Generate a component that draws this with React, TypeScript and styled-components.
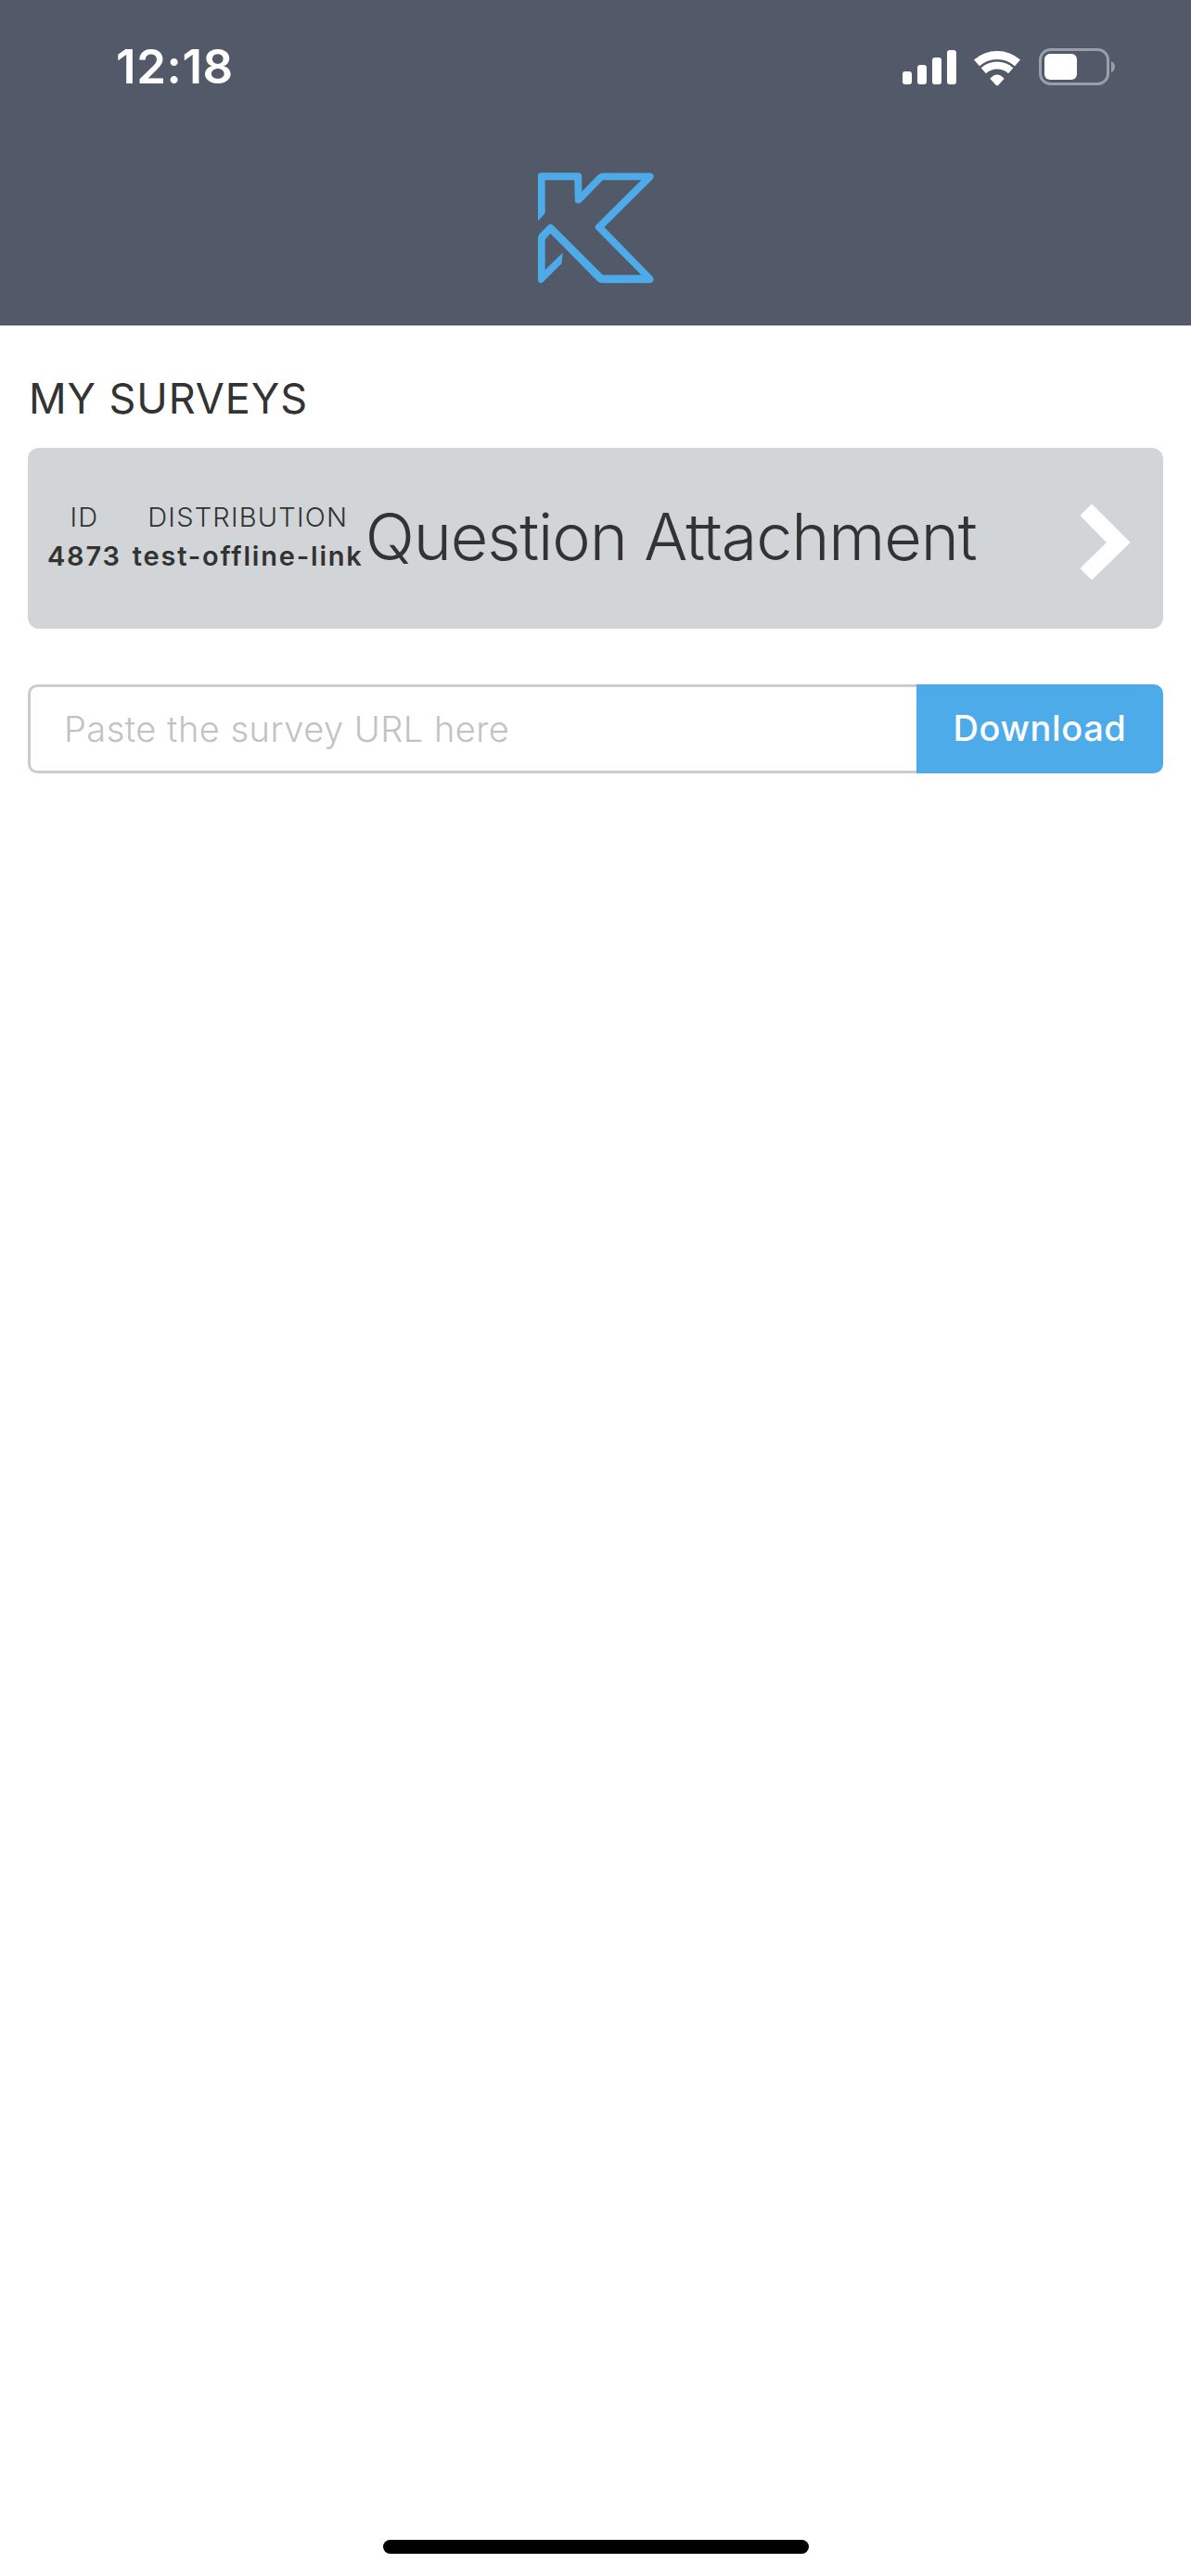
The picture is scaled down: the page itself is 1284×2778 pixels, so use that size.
import React from "react";
import styled, { createGlobalStyle } from "styled-components";

const Global = createGlobalStyle`
  html, body { margin: 0; padding: 0; background: #fff; }
  * { box-sizing: border-box; }
  body { font-family: Inter, "Liberation Sans", sans-serif; color: #333; }
`;

const Page = styled.div`
  width: 1284px;
  height: 2778px;
  display: flex;
  flex-direction: column;
  background: #fff;
`;

const Header = styled.header`
  height: 351px;
  background: #525969;
  display: flex;
  flex-direction: column;
  align-items: center;
`;

const StatusBar = styled.div`
  width: 100%;
  height: 186px;
  padding: 52px 82px 0 125px;
  display: flex;
  justify-content: space-between;
  align-items: flex-start;
`;

const Time = styled.span`
  font-size: 51px;
  line-height: 40px;
  font-weight: 600;
  color: #fff;
  letter-spacing: 0.6px;
`;

const StatusIcons = styled.div`
  display: flex;
  align-items: flex-start;
  gap: 19px;
`;

const StatusGlyph = styled.svg`
  margin-top: 2px;
`;

const LogoMark = styled.svg`
  margin-left: 1px;
`;

const ChevronMark = styled.svg`
  margin-top: 8px;
`;

const Main = styled.main`
  flex: 1;
  padding: 0 30px;
  display: flex;
  flex-direction: column;
`;

const Title = styled.h1`
  margin: 56px 0 0 1px;
  height: 76px;
  font-size: 45px;
  line-height: 46px;
  font-weight: 400;
  letter-spacing: 0.9px;
  color: #333;
`;

const Card = styled.div`
  height: 195px;
  background: #d2d5d8;
  border-radius: 12px;
  padding: 0 36px 0 21px;
  display: flex;
  align-items: center;
`;

const Meta = styled.div`
  display: flex;
  gap: 12px;
  margin-top: -4px;
`;

const MetaColumn = styled.div`
  display: flex;
  flex-direction: column;
  align-items: center;
`;

const MetaLabel = styled.span`
  font-size: 29px;
  line-height: 42px;
  font-weight: 350;
  letter-spacing: 1.2px;
  color: #333;
`;

const MetaValue = styled.span`
  font-size: 29px;
  line-height: 42px;
  font-weight: 600;
  letter-spacing: 1.8px;
  color: #333;
`;

const CardTitle = styled.span`
  flex: 1;
  margin: -3px 0 0 2px;
  font-size: 70px;
  line-height: 80px;
  font-weight: 350;
  letter-spacing: -1.1px;
  color: #333;
  white-space: nowrap;
`;

const SearchRow = styled.form`
  margin-top: 60px;
  height: 96px;
  display: flex;
`;

const UrlInput = styled.input`
  flex: 1;
  min-width: 0;
  height: 100%;
  padding: 0 36px;
  border: 3px solid #ccc;
  border-right: none;
  border-radius: 10px 0 0 10px;
  outline: none;
  background: #fff;
  font-family: Inter, "Liberation Sans", sans-serif;
  font-size: 38px;
  font-weight: 300;
  letter-spacing: 0.5px;
  &::placeholder { color: #c2c2c2; opacity: 1; }
`;

const DownloadButton = styled.button`
  width: 266px;
  height: 100%;
  border: none;
  border-radius: 0 10px 10px 0;
  background: #4eabea;
  color: #fff;
  font-family: Inter, "Liberation Sans", sans-serif;
  font-size: 38px;
  font-weight: 500;
  letter-spacing: 0.6px;
  padding: 0 0 3px;
`;

const HomeIndicator = styled.div`
  align-self: center;
  width: 459px;
  height: 15px;
  margin-bottom: 24px;
  border-radius: 8px;
  background: #000;
`;

const Signal = () => (
  <StatusGlyph width="58" height="37" viewBox="0 0 58 37">
    <rect x="0" y="23" width="10" height="14" rx="3" fill="#fff" />
    <rect x="16" y="16" width="10" height="21" rx="3" fill="#fff" />
    <rect x="32" y="8" width="10" height="29" rx="3" fill="#fff" />
    <rect x="48" y="0" width="10" height="37" rx="3" fill="#fff" />
  </StatusGlyph>
);

const Wifi = () => (
  <StatusGlyph width="51" height="39" viewBox="300 70 153 116">
    <path d="M309 111 A99 99 0 0 1 441 111" fill="none" stroke="#fff" strokeWidth="27" />
    <path d="M331 136 A66 66 0 0 1 419 136" fill="none" stroke="#fff" strokeWidth="24" />
    <path d="M352 162 Q375 136 398 162 L379 183 Q375 186 371 183 Z" fill="#fff" />
  </StatusGlyph>
);

const Battery = () => (
  <svg width="82" height="40" viewBox="0 0 82 40">
    <rect x="1.5" y="1.5" width="73" height="37" rx="11" fill="none" stroke="#9a9fa9" strokeWidth="3" />
    <rect x="6" y="6" width="35" height="28" rx="6" fill="#fff" />
    <path d="M78 14 Q82 16 82 20 Q82 24 78 26 Z" fill="#9a9fa9" />
  </svg>
);

const Logo = () => (
  <LogoMark width="125" height="120" viewBox="120 78 376 360" aria-label="K logo">
    <path
      fill="#4eabea"
      d="M120 235 L120 88 Q120 78 130 78 L250 78 Q262 78 262 90 L262 140 L315 85 Q322 79 332 79 L482 79 Q492 79 495 88 Q497 95 490 101 L335 255 L490 414 Q497 422 494 429 Q491 437 482 436 L330 436 Q320 436 313 430 L160 275 L143 295 L143 393 L200 338 L197 372 L135 434 Q122 441 120 425 L120 290 Q120 282 125 277 L155 247 Q162 243 168 248 L330 410 L455 410 L308 262 Q303 255 308 248 L455 102 L330 102 L262 172 Q250 185 240 172 L238 102 L143 102 L143 210 Z"
    />
  </LogoMark>
);

const Chevron = () => (
  <ChevronMark width="53" height="81" viewBox="0 0 53 81">
    <path
      fill="#fff"
      stroke="#fff"
      strokeWidth="3"
      strokeLinejoin="round"
      d="M1.5 12 L12 1.5 L51.5 41 L12 79.5 L1.5 69 L30 41 Z"
    />
  </ChevronMark>
);

export default function App() {
  return (
    <Page>
      <Global />
      <Header>
        <StatusBar>
          <Time>12:18</Time>
          <StatusIcons>
            <Signal />
            <Wifi />
            <Battery />
          </StatusIcons>
        </StatusBar>
        <Logo />
      </Header>
      <Main>
        <Title>MY SURVEYS</Title>
        <Card>
          <Meta>
            <MetaColumn>
              <MetaLabel>ID</MetaLabel>
              <MetaValue>4873</MetaValue>
            </MetaColumn>
            <MetaColumn>
              <MetaLabel>DISTRIBUTION</MetaLabel>
              <MetaValue>test-offline-link</MetaValue>
            </MetaColumn>
          </Meta>
          <CardTitle>Question Attachment</CardTitle>
          <Chevron />
        </Card>
        <SearchRow onSubmit={(e) => e.preventDefault()}>
          <UrlInput placeholder="Paste the survey URL here" />
          <DownloadButton type="button">Download</DownloadButton>
        </SearchRow>
      </Main>
      <HomeIndicator />
    </Page>
  );
}
